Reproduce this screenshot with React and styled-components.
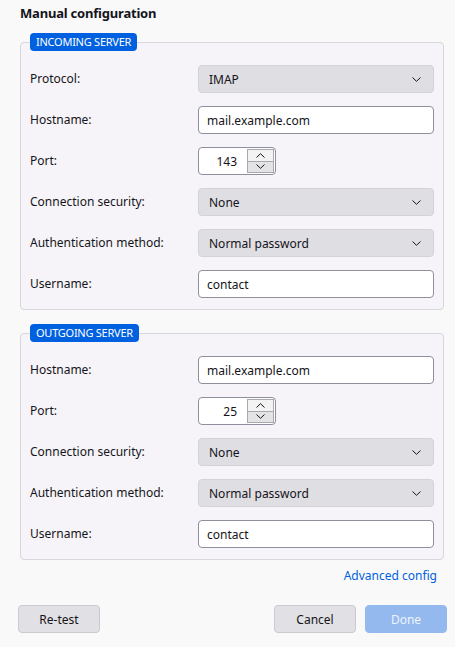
import React from 'react';
import styled, { createGlobalStyle } from 'styled-components';

const Global = createGlobalStyle`
  html, body { margin: 0; padding: 0; background: #f9f9fa; }
  body {
    font-family: "Noto Sans", "Open Sans", sans-serif;
    font-size: 12px;
    color: #15141a;
  }
  * { box-sizing: border-box; }
`;

const Page = styled.div`
  width: 455px;
  height: 647px;
  padding: 4px 8px 0 20px;
  display: flex;
  flex-direction: column;
`;

const Title = styled.h1`
  margin: 0 0 11px;
  font-size: 13px;
  line-height: 18px;
  font-weight: 700;
  letter-spacing: -0.2px;
`;

const Section = styled.fieldset`
  margin: ${(p) => (p.$first ? '0' : '14px')} 3px 0 0;
  padding: 14px 9px 11px 9px;
  border: 1px solid #d8d7dd;
  border-radius: 4px;
  background: #f6f4f8;
  min-width: 0;
`;

const Legend = styled.legend`
  padding: 0 6px;
  height: 18px;
  line-height: 18px;
  background: #0061e0;
  color: #ffffff;
  border-radius: 4px;
  font-size: 11px;
  font-weight: 400;
  letter-spacing: -0.25px;
  text-transform: uppercase;
`;

const Grid = styled.div`
  display: grid;
  grid-template-columns: 168px 1fr;
  row-gap: 13px;
  align-items: center;
`;

const Label = styled.label`
  line-height: 18px;
`;

const SelectBox = styled.div`
  height: 28px;
  display: flex;
  align-items: center;
  justify-content: space-between;
  padding: 0 12px 0 10px;
  background: #dfdee3;
  border: 1px solid #d3d2d8;
  border-radius: 4px;
`;

const TextInput = styled.input`
  height: 28px;
  width: 100%;
  padding: 0 8px;
  border: 1px solid #8f8f9d;
  border-radius: 4px;
  background: #ffffff;
  font: inherit;
  color: inherit;
  outline: none;
`;

const PortBox = styled.div`
  width: 78px;
  height: 28px;
  display: flex;
  padding: 1px 1px 1px 0;
  border: 1px solid #8f8f9d;
  border-radius: 4px;
  background: #ffffff;
`;

const PortInput = styled.input`
  flex: 1;
  min-width: 0;
  border: none;
  background: transparent;
  text-align: right;
  padding: 0 10px 0 0;
  font: inherit;
  color: inherit;
  outline: none;
`;

const Spinner = styled.div`
  width: 27px;
  display: flex;
  flex-direction: column;
  border: 1px solid #a9a9ad;
`;

const SpinButton = styled.div`
  flex: 1;
  display: flex;
  align-items: center;
  justify-content: center;
  background: ${(p) => (p.$down ? '#e3e3e5' : '#f3f3f4')};
  border-top: ${(p) => (p.$down ? '1px solid #a9a9ad' : 'none')};
`;

const LinkRow = styled.div`
  margin-top: 7px;
  padding-right: 10px;
  text-align: right;
  line-height: 18px;
`;

const Link = styled.a`
  color: #0061e0;
  text-decoration: none;
`;

const Footer = styled.div`
  margin: 20px 0 0 -2px;
  display: flex;
  gap: 9px;
`;

const Button = styled.button`
  width: 82px;
  height: 28px;
  border-radius: 4px;
  border: 1px solid ${(p) => (p.$primary ? '#94b9ee' : '#cbcacf')};
  background: ${(p) => (p.$primary ? '#94b9ee' : '#e1e0e4')};
  color: ${(p) => (p.$primary ? '#eef4fd' : '#15141a')};
  font: inherit;
  padding: 0;
  margin-left: ${(p) => (p.$push ? 'auto' : '0')};
`;

const Chevron = ({ up }) => (
  <svg width="9" height="5" viewBox="0 0 9 5" fill="none">
    <path
      d={up ? 'M0.5 4.5 L4.5 0.7 L8.5 4.5' : 'M0.5 0.5 L4.5 4.3 L8.5 0.5'}
      stroke="#15141a"
      strokeWidth="1"
    />
  </svg>
);

const Select = ({ value }) => (
  <SelectBox>
    <span>{value}</span>
    <Chevron />
  </SelectBox>
);

const Port = ({ value }) => (
  <PortBox>
    <PortInput defaultValue={value} />
    <Spinner>
      <SpinButton>
        <Chevron up />
      </SpinButton>
      <SpinButton $down>
        <Chevron />
      </SpinButton>
    </Spinner>
  </PortBox>
);

const Server = ({ title, first, protocol, port }) => (
  <Section $first={first}>
    <Legend>{title}</Legend>
    <Grid>
      {protocol && (
        <>
          <Label>Protocol:</Label>
          <Select value={protocol} />
        </>
      )}
      <Label>Hostname:</Label>
      <TextInput defaultValue="mail.example.com" />
      <Label>Port:</Label>
      <div>
        <Port value={port} />
      </div>
      <Label>Connection security:</Label>
      <Select value="None" />
      <Label>Authentication method:</Label>
      <Select value="Normal password" />
      <Label>Username:</Label>
      <TextInput defaultValue="contact" />
    </Grid>
  </Section>
);

export default function App() {
  return (
    <>
      <Global />
      <Page>
        <Title>Manual configuration</Title>
        <Server title="Incoming server" first protocol="IMAP" port="143" />
        <Server title="Outgoing server" port="25" />
        <LinkRow>
          <Link href="#">Advanced config</Link>
        </LinkRow>
        <Footer>
          <Button>Re-test</Button>
          <Button $push>Cancel</Button>
          <Button $primary>Done</Button>
        </Footer>
      </Page>
    </>
  );
}
